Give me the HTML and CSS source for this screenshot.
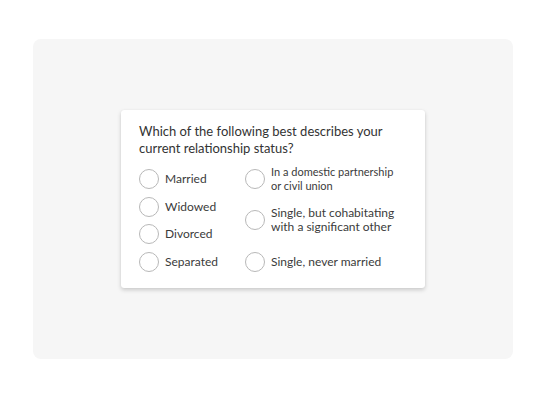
FILE: index.html
```html
<!DOCTYPE html>
<html lang="en">
<head>
  <meta charset="UTF-8">
  <meta name="viewport" content="width=device-width, initial-scale=1.0">
  <title>Relationship status</title>
  <link rel="stylesheet" href="styles.css">
</head>
<body>
  <!-- Grey stage -->
  <div class="stage">
    <!-- Question Card -->
    <div class="card">
      <p class="question">Which of the following best describes your current relationship status?</p>

      <div class="options">
        <label class="option r1 c1"><span class="radio"></span><span>Married</span></label>
        <label class="option r2 c1"><span class="radio"></span><span>Widowed</span></label>
        <label class="option r3 c1"><span class="radio"></span><span>Divorced</span></label>
        <label class="option r4 c1"><span class="radio"></span><span>Separated</span></label>

        <label class="option r1 c2"><span class="radio"></span><span class="small">In a domestic partnership<br>or civil union</span></label>
        <label class="option r23 c2"><span class="radio"></span><span>Single, but cohabitating<br>with a significant other</span></label>
        <label class="option r4 c2"><span class="radio"></span><span>Single, never married</span></label>
      </div>
    </div>
  </div>
</body>
</html>
```

FILE: styles.css
```css
/* Reset */
* {
  margin: 0;
  padding: 0;
  box-sizing: border-box;
}

body {
  background: #fff;
  font-family: 'Lato', sans-serif;
  color: #333e48;
}

/* Stage */
.stage {
  width: 480px;
  height: 320px;
  margin: 39px 0 0 33px;
  background: #f6f6f6;
  border-radius: 8px;
  display: flex;
  justify-content: center;
  align-items: center;
}

/* Card */
.card {
  width: 304px;
  height: 178px;
  background: #fff;
  border-radius: 3px;
  padding: 13px 18px 12px 18px;
  box-shadow: 0 2px 4px rgba(0, 0, 0, 0.18), 0 0 1px rgba(0, 0, 0, 0.08);
}

.question {
  font-size: 13px;
  line-height: 17px;
  color: #333;
  margin-bottom: 8px;
}

/* Options grid */
.options {
  display: grid;
  grid-template-columns: 106px 1fr;
  grid-template-rows: repeat(4, 27.7px);
}

.option {
  display: flex;
  align-items: center;
  gap: 6px;
  font-size: 12px;
  line-height: 14px;
  color: #3b3b3b;
}

.option .small {
  font-size: 11px;
  line-height: 14px;
}

.radio {
  flex: none;
  width: 20px;
  height: 20px;
  border: 1px solid #b8b8b8;
  border-radius: 50%;
  background: #fff;
}

.c1 { grid-column: 1; }
.c2 { grid-column: 2; }
.r1 { grid-row: 1; }
.r2 { grid-row: 2; }
.r3 { grid-row: 3; }
.r4 { grid-row: 4; }
.r23 { grid-row: 2 / 4; }
```
